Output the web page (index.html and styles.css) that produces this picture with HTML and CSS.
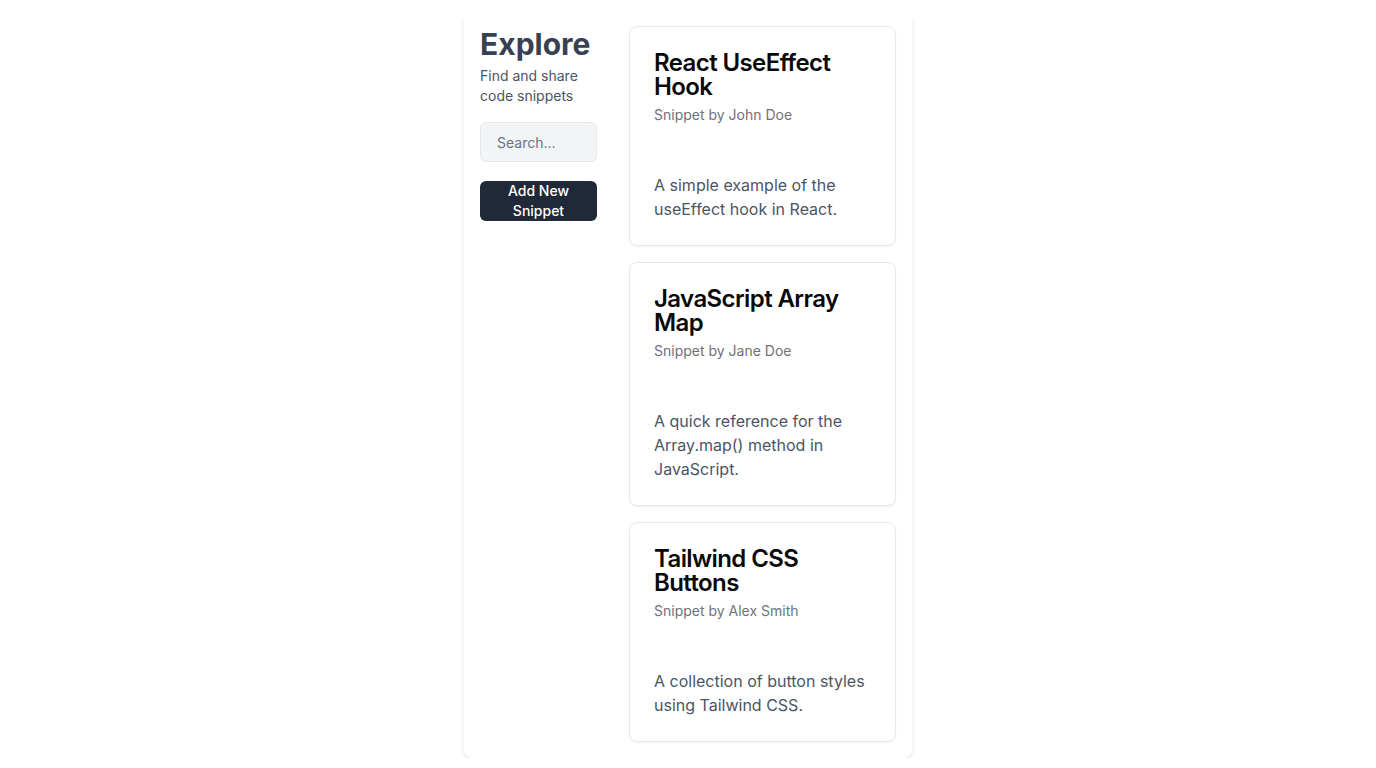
FILE: index.html
```html
<!DOCTYPE html>
<html lang="en">
<head>
<meta charset="utf-8">
<title>Explore</title>
<link rel="stylesheet" href="styles.css">
</head>
<body>
<main class="panel">
  <aside class="sidebar">
    <h1 class="title">Explore</h1>
    <p class="subtitle">Find and share code snippets</p>
    <input class="search" type="text" placeholder="Search...">
    <button class="add-btn">Add New Snippet</button>
  </aside>
  <section class="cards">
    <article class="card">
      <div class="card-header">
        <h2 class="card-title">React UseEffect Hook</h2>
        <p class="card-desc">Snippet by John Doe</p>
      </div>
      <div class="card-content">
        <p>A simple example of the useEffect hook in React.</p>
      </div>
    </article>
    <article class="card">
      <div class="card-header">
        <h2 class="card-title">JavaScript Array Map</h2>
        <p class="card-desc">Snippet by Jane Doe</p>
      </div>
      <div class="card-content">
        <p>A quick reference for the Array.map() method in JavaScript.</p>
      </div>
    </article>
    <article class="card">
      <div class="card-header">
        <h2 class="card-title">Tailwind CSS Buttons</h2>
        <p class="card-desc">Snippet by Alex Smith</p>
      </div>
      <div class="card-content">
        <p>A collection of button styles using Tailwind CSS.</p>
      </div>
    </article>
  </section>
</main>
</body>
</html>
```

FILE: styles.css
```css
* { box-sizing: border-box; }
html, body { margin: 0; padding: 0; background: #ffffff; }
body {
  font-family: Inter, "Noto Sans", "Liberation Sans", sans-serif;
  color: #111827;
  padding-top: 10px;
}
.panel {
  width: 448px;
  margin: 0 auto;
  background: #fff;
  border-radius: 8px;
  box-shadow: 0 4px 6px -1px rgba(0,0,0,0.1), 0 2px 4px -2px rgba(0,0,0,0.1);
  padding: 16px;
  display: flex;
  gap: 32px;
  align-items: flex-start;
}
.sidebar {
  width: 117px;
  flex: none;
  display: flex;
  flex-direction: column;
}
.title {
  margin: 0;
  font-size: 30px;
  line-height: 36px;
  font-weight: 700;
  color: #374151;
}
.subtitle {
  margin: 4px 0 0;
  font-size: 14px;
  line-height: 20px;
  color: #4b5563;
}
.search {
  margin-top: 16px;
  height: 40px;
  width: 100%;
  background: #f3f4f6;
  border: 1px solid #e5e7eb;
  border-radius: 6px;
  padding: 0 16px;
  font-family: inherit;
  font-size: 14px;
  color: #111827;
  outline: none;
}
.search::placeholder { color: #6b7280; }
.add-btn {
  margin-top: 19px;
  height: 40px;
  width: 100%;
  background: #1f2937;
  color: #fff;
  border: none;
  border-radius: 6px;
  padding: 0 16px;
  font-family: inherit;
  font-size: 14px;
  font-weight: 500;
  line-height: 20px;
  display: flex;
  align-items: center;
  justify-content: center;
  text-align: center;
}
.cards {
  width: 267px;
  flex: none;
  display: flex;
  flex-direction: column;
  gap: 16px;
}
.card {
  border: 1px solid #e5e7eb;
  border-radius: 8px;
  background: #fff;
  box-shadow: 0 1px 2px rgba(0,0,0,0.05);
}
.card-header {
  padding: 24px;
  display: flex;
  flex-direction: column;
  gap: 6px;
}
.card-title {
  margin: 0;
  font-size: 24px;
  line-height: 24px;
  font-weight: 600;
  letter-spacing: -0.6px;
  color: #09090b;
}
.card-desc {
  margin: 0;
  font-size: 14px;
  line-height: 20px;
  color: #71717a;
}
.card-content {
  padding: 24px 24px 24px;
}
.card-content p {
  margin: 0;
  font-size: 16px;
  line-height: 24px;
  color: #4b5563;
}
```
